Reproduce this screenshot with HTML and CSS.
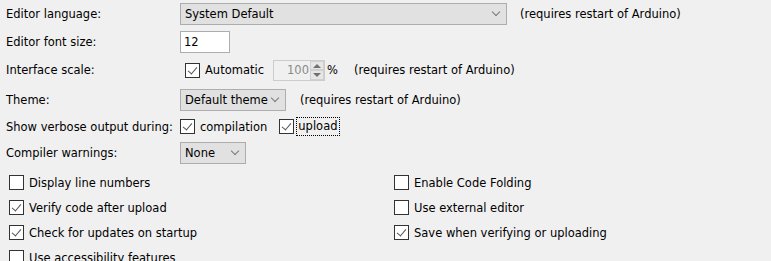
FILE: index.html
```html
<!DOCTYPE html>
<html lang="en">
<head>
    <meta charset="UTF-8">
    <title>Preferences</title>
    <link rel="stylesheet" href="styles.css">
</head>
<body>
    <!-- top settings: label column + control column -->
    <div class="settings">
        <label class="label">Editor language:</label>
        <div class="controls">
            <div class="select lang-select">System Default <span class="chev"></span></div>
            <span class="note lang-note">(requires restart of Arduino)</span>
        </div>

        <label class="label">Editor font size:</label>
        <div class="controls">
            <div class="textbox">12</div>
        </div>

        <label class="label">Interface scale:</label>
        <div class="controls scale">
            <span class="check checked"></span>
            <span class="check-text">Automatic</span>
            <div class="spinner">
                <span class="spin-value">100</span>
                <span class="spin-buttons">
                    <span class="spin-up"></span>
                    <span class="spin-down"></span>
                </span>
            </div>
            <span class="percent">%</span>
            <span class="note">(requires restart of Arduino)</span>
        </div>

        <label class="label">Theme:</label>
        <div class="controls">
            <div class="select theme-select">Default theme <span class="chev"></span></div>
            <span class="note theme-note">(requires restart of Arduino)</span>
        </div>

        <label class="label">Show verbose output during:</label>
        <div class="controls">
            <span class="check checked"></span>
            <span class="check-text">compilation</span>
            <span class="check checked second"></span>
            <span class="check-text focused">upload</span>
        </div>

        <label class="label">Compiler warnings:</label>
        <div class="controls">
            <div class="select warn-select">None <span class="chev"></span></div>
        </div>
    </div>

    <!-- checkbox options in two columns -->
    <div class="options">
        <div class="option"><span class="check"></span><span class="check-text">Display line numbers</span></div>
        <div class="option"><span class="check"></span><span class="check-text">Enable Code Folding</span></div>
        <div class="option"><span class="check checked"></span><span class="check-text">Verify code after upload</span></div>
        <div class="option"><span class="check"></span><span class="check-text">Use external editor</span></div>
        <div class="option"><span class="check checked"></span><span class="check-text">Check for updates on startup</span></div>
        <div class="option"><span class="check checked"></span><span class="check-text">Save when verifying or uploading</span></div>
        <div class="option"><span class="check"></span><span class="check-text">Use accessibility features</span></div>
    </div>
</body>
</html>
```

FILE: styles.css
```css
body {
    margin: 0;
    background-color: #f0f0f0;
    color: #000;
    font-family: 'DejaVu Sans', sans-serif;
    font-size: 11.5px;
    overflow: hidden;
    white-space: nowrap;
}

.settings {
    display: grid;
    grid-template-columns: 174px auto;
    grid-template-rows: 27px 29px 28px 31px 23px 30px;
    padding-left: 6px;
}
.label {
    display: flex;
    align-items: center;
}
.controls {
    display: flex;
    align-items: center;
}

/* combo boxes */
.select {
    box-sizing: border-box;
    height: 22px;
    background-color: #e1e1e1;
    border: 1px solid #adadad;
    display: flex;
    align-items: center;
    justify-content: space-between;
    padding: 0 7px 0 4px;
}
.chev {
    width: 5px;
    height: 5px;
    border-right: 1px solid #7a7a7a;
    border-bottom: 1px solid #7a7a7a;
    transform: rotate(45deg);
    margin-top: -4px;
    flex-shrink: 0;
}
.lang-select { width: 327px; }
.theme-select { width: 106px; }
.warn-select { width: 66px; }
.lang-note { margin-left: 13px; }
.theme-note { margin-left: 14px; }

.textbox {
    box-sizing: border-box;
    width: 50px;
    height: 22px;
    background-color: #fff;
    border: 1px solid #abadb3;
    padding: 0 3px;
    display: flex;
    align-items: center;
}

/* check boxes */
.check {
    box-sizing: border-box;
    width: 15px;
    height: 15px;
    border: 1px solid #333;
    background-color: #fff;
    position: relative;
    flex-shrink: 0;
}
.check.checked::after {
    content: "";
    position: absolute;
    left: 4px;
    top: 1px;
    width: 4px;
    height: 8px;
    border-right: 1px solid #555;
    border-bottom: 1px solid #555;
    transform: rotate(40deg);
}
.check-text {
    margin-left: 5px;
}
.check.second {
    margin-left: 12px;
}
.focused {
    margin-left: 3px;
    padding: 0 1px;
    outline: 1px dotted #000;
    line-height: 17px;
}

.scale {
    padding-left: 5px;
}
.spinner {
    box-sizing: border-box;
    margin-left: 9px;
    width: 52px;
    height: 21px;
    border: 1px solid #cccccc;
    background-color: #f0f0f0;
    display: flex;
    align-items: center;
}
.spin-value {
    flex: 1;
    text-align: right;
    color: #8a8a8a;
    padding-right: 1px;
}
.spin-buttons {
    width: 14px;
    height: 19px;
    display: flex;
    flex-direction: column;
}
.spin-up, .spin-down {
    flex: 1;
    background-color: #e6e6e6;
    border: 1px solid #d0d0d0;
    position: relative;
}
.spin-up::after, .spin-down::after {
    content: "";
    position: absolute;
    left: 2px;
    border-left: 4px solid transparent;
    border-right: 4px solid transparent;
}
.spin-up::after {
    top: 2px;
    border-bottom: 4px solid #707070;
}
.spin-down::after {
    top: 2px;
    border-top: 4px solid #707070;
}
.percent {
    margin-left: 2px;
    margin-right: 16px;
}

.options {
    margin-top: 2px;
    display: grid;
    grid-template-columns: 385px auto;
    grid-auto-rows: 25px;
    padding-left: 9px;
}
.option {
    display: flex;
    align-items: center;
}
```
